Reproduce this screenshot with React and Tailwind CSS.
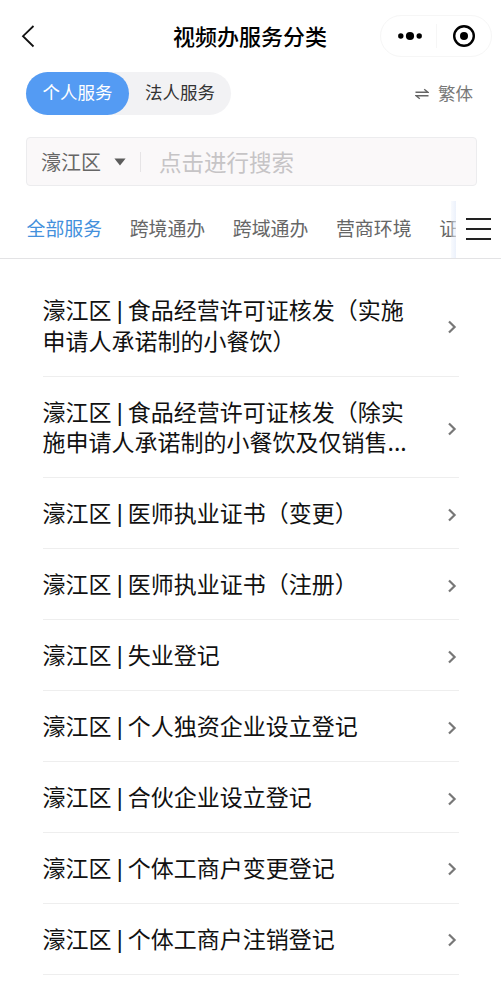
import React, { useState } from "react";

const TABS = ["全部服务", "跨境通办", "跨域通办", "营商环境", "证件办理"];

const SERVICES = [
    "食品经营许可证核发（实施申请人承诺制的小餐饮）",
    "食品经营许可证核发（除实施申请人承诺制的小餐饮及仅销售...",
    "医师执业证书（变更）",
    "医师执业证书（注册）",
    "失业登记",
    "个人独资企业设立登记",
    "合伙企业设立登记",
    "个体工商户变更登记",
    "个体工商户注销登记",
];

function NavBar() {
    return (
        <header className="flex h-[72px] items-center pl-5 pr-[9px]">
            <button className="w-[144px] flex-none" aria-label="返回">
                <svg width="16" height="24" viewBox="0 0 16 24" fill="none" stroke="#111" strokeWidth="1.8">
                    <path d="M13.5 2L3 12.2L13.5 22.5" />
                </svg>
            </button>
            <h1 className="w-[172px] flex-none pb-[3px] text-center text-[22px] leading-8 font-medium text-black whitespace-nowrap">视频办服务分类</h1>
            <div className="ml-auto flex h-[42px] w-[112px] items-center rounded-full border border-[#f6f6f6]">
                <button className="flex w-[55px] flex-none justify-center pl-[3px]" aria-label="更多">
                    <svg width="26" height="10" viewBox="0 0 26 10" fill="#000">
                        <circle cx="3.8" cy="5" r="2.7" />
                        <circle cx="13" cy="5" r="4.1" />
                        <circle cx="22.2" cy="5" r="2.7" />
                    </svg>
                </button>
                <span className="h-6 w-px bg-[#f6f6f6]" />
                <button className="flex w-[54px] flex-none justify-center" aria-label="关闭">
                    <svg width="24" height="24" viewBox="0 0 24 24">
                        <circle cx="12" cy="12" r="9.8" fill="none" stroke="#000" strokeWidth="2.4" />
                        <circle cx="12" cy="12" r="4" fill="#000" />
                    </svg>
                </button>
            </div>
        </header>
    );
}

function AudienceSwitch({ audience, setAudience }) {
    return (
        <div className="flex items-center justify-between pl-[26px] pr-[28px]">
            <div className="flex h-[43px] rounded-full bg-[#f2f2f4] text-[17.5px]">
                <button
                    onClick={() => setAudience("personal")}
                    className={`w-[103px] pb-[2px] rounded-full ${audience === "personal" ? "bg-[#549bf3] text-white" : "text-[#333]"}`}
                >
                    个人服务
                </button>
                <button
                    onClick={() => setAudience("legal")}
                    className={`w-[102px] pb-[2px] rounded-full ${audience === "legal" ? "bg-[#549bf3] text-white" : "text-[#333]"}`}
                >
                    法人服务
                </button>
            </div>
            <button className="flex items-center gap-[9px] text-[17.5px] text-[#777]">
                <svg width="14" height="12" viewBox="0 0 14 12" fill="none" stroke="#666" strokeWidth="1.4">
                    <path d="M0.5 4.3H13L9.2 1.2M13.5 7.7H1L4.8 10.8" />
                </svg>
                繁体
            </button>
        </div>
    );
}

function SearchBar() {
    return (
        <div className="ml-[26px] mr-6 mt-[22px] flex h-[49px] items-center rounded-[4px] border border-[#ececee] bg-[#faf8f9] pl-[14px]">
            <span className="text-[20px] text-[#666]">濠江区</span>
            <svg className="ml-[13px]" width="12" height="8" viewBox="0 0 12 8" fill="#5c5c5c">
                <path d="M0.4 0.4H11.6L6 7.6Z" />
            </svg>
            <span className="ml-[14px] h-5 w-px bg-[#e6e4e6]" />
            <span className="ml-[18px] text-[22.5px] text-[#c6c4c6]">点击进行搜索</span>
        </div>
    );
}

function CategoryTabs({ active, setActive }) {
    return (
        <nav className="mt-[15px] flex h-[58px] border-b border-[#e3e3e5]">
            <div className="flex flex-1 items-center gap-[27.6px] overflow-hidden pl-[26.5px] pb-[3px]">
                {TABS.map((tab, idx) => (
                    <button
                        key={tab}
                        onClick={() => setActive(idx)}
                        className={`flex-none text-[18.9px] whitespace-nowrap ${active === idx ? "text-[#4390dc]" : "text-[#666]"}`}
                    >
                        {tab}
                    </button>
                ))}
            </div>
            <button className="relative flex w-[45px] flex-none flex-col items-start justify-center gap-[8px] bg-white pl-[10px] pb-[2px]" aria-label="全部分类">
                {/* soft edge over the clipped tab */}
                <span className="absolute -left-[5px] top-0 h-full w-[5px] bg-linear-to-r from-[#e8effb]/30 to-[#e4ecfa]/70" />
                <span className="h-[2px] w-[25px] bg-[#222]" />
                <span className="h-[2px] w-[25px] bg-[#222]" />
                <span className="h-[2px] w-[25px] bg-[#222]" />
            </button>
        </nav>
    );
}

function ServiceRow({ name }) {
    return (
        <li className="flex items-center justify-between border-b border-[#eeeeee] pt-[18.9px] pb-[20.5px]">
            <p className="w-[368px] text-[23px] leading-[30.5px] text-[#111]">
                濠江区 <span className="font-['Liberation_Sans',sans-serif] leading-none">|</span> {name}
            </p>
            <svg className="mr-[2px] mt-[5px] flex-none" width="10" height="14" viewBox="0 0 10 14" fill="none" stroke="#777" strokeWidth="2.2">
                <path d="M2 1.5L7.6 7L2 12.5" />
            </svg>
        </li>
    );
}

export default function App() {
    const [audience, setAudience] = useState("personal");
    const [active, setActive] = useState(0);

    return (
        <div lang="zh-CN" className="h-[990px] w-[501px] overflow-hidden bg-white font-['Noto_Sans_CJK_SC',sans-serif]">
            <NavBar />
            <AudienceSwitch audience={audience} setAudience={setAudience} />
            <SearchBar />
            <CategoryTabs active={active} setActive={setActive} />
            <ul className="ml-[42.5px] mr-[42px] mt-[16.6px]">
                {SERVICES.map((name) => (
                    <ServiceRow key={name} name={name} />
                ))}
            </ul>
        </div>
    );
}
